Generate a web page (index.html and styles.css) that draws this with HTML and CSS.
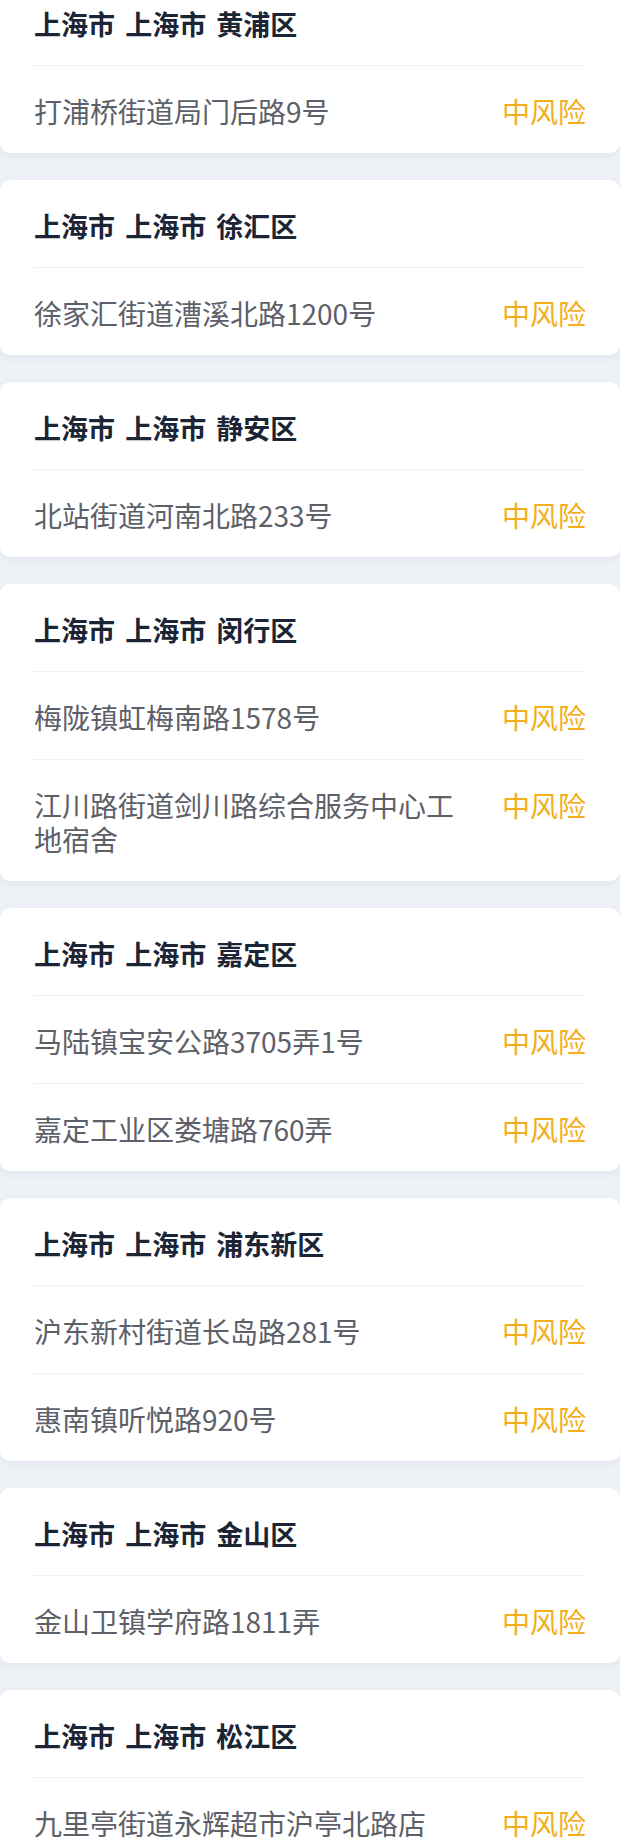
FILE: index.html
```html
<!DOCTYPE html>
<html lang="zh-CN">
<head>
<meta charset="utf-8">
<title>风险地区</title>
<link rel="stylesheet" href="styles.css">
</head>
<body>
<main class="list">
  <section class="card">
    <h2 class="card-title">上海市 上海市 黄浦区</h2>
    <div class="row"><span class="addr">打浦桥街道局门后路9号</span><span class="risk">中风险</span></div>
  </section>
  <section class="card">
    <h2 class="card-title">上海市 上海市 徐汇区</h2>
    <div class="row"><span class="addr">徐家汇街道漕溪北路1200号</span><span class="risk">中风险</span></div>
  </section>
  <section class="card">
    <h2 class="card-title">上海市 上海市 静安区</h2>
    <div class="row"><span class="addr">北站街道河南北路233号</span><span class="risk">中风险</span></div>
  </section>
  <section class="card">
    <h2 class="card-title">上海市 上海市 闵行区</h2>
    <div class="row"><span class="addr">梅陇镇虹梅南路1578号</span><span class="risk">中风险</span></div>
    <div class="row"><span class="addr">江川路街道剑川路综合服务中心工地宿舍</span><span class="risk">中风险</span></div>
  </section>
  <section class="card">
    <h2 class="card-title">上海市 上海市 嘉定区</h2>
    <div class="row"><span class="addr">马陆镇宝安公路3705弄1号</span><span class="risk">中风险</span></div>
    <div class="row"><span class="addr">嘉定工业区娄塘路760弄</span><span class="risk">中风险</span></div>
  </section>
  <section class="card">
    <h2 class="card-title">上海市 上海市 浦东新区</h2>
    <div class="row"><span class="addr">沪东新村街道长岛路281号</span><span class="risk">中风险</span></div>
    <div class="row"><span class="addr">惠南镇听悦路920号</span><span class="risk">中风险</span></div>
  </section>
  <section class="card">
    <h2 class="card-title">上海市 上海市 金山区</h2>
    <div class="row"><span class="addr">金山卫镇学府路1811弄</span><span class="risk">中风险</span></div>
  </section>
  <section class="card">
    <h2 class="card-title">上海市 上海市 松江区</h2>
    <div class="row"><span class="addr">九里亭街道永辉超市沪亭北路店</span><span class="risk">中风险</span></div>
  </section>
</main>
</body>
</html>
```
FILE: styles.css
```css
html, body {
  margin: 0;
  padding: 0;
  background: #eef2f7;
}
body {
  font-family: "Noto Sans CJK SC", "Noto Sans", sans-serif;
}
.list {
  display: flex;
  flex-direction: column;
  gap: 27px;
  margin-top: -22px;
  padding: 0 0 40px;
}
.card {
  background: #ffffff;
  border-radius: 10px;
  padding: 0 34px;
  box-shadow: 0 3px 8px rgba(120, 140, 170, 0.10);
}
.card-title {
  margin: 0;
  padding: 29px 0 24px;
  font-size: 27px;
  line-height: 34px;
  font-weight: 700;
  color: #1b2535;
  word-spacing: 4px;
}
.row {
  display: flex;
  align-items: flex-start;
  gap: 40px;
  border-top: 1px solid #efefef;
  padding: 28px 0 25px;
  font-size: 28px;
  line-height: 34px;
}
.addr {
  flex: 1;
  color: #5d6068;
}
.risk {
  flex: none;
  color: #f4ae1a;
}
```
